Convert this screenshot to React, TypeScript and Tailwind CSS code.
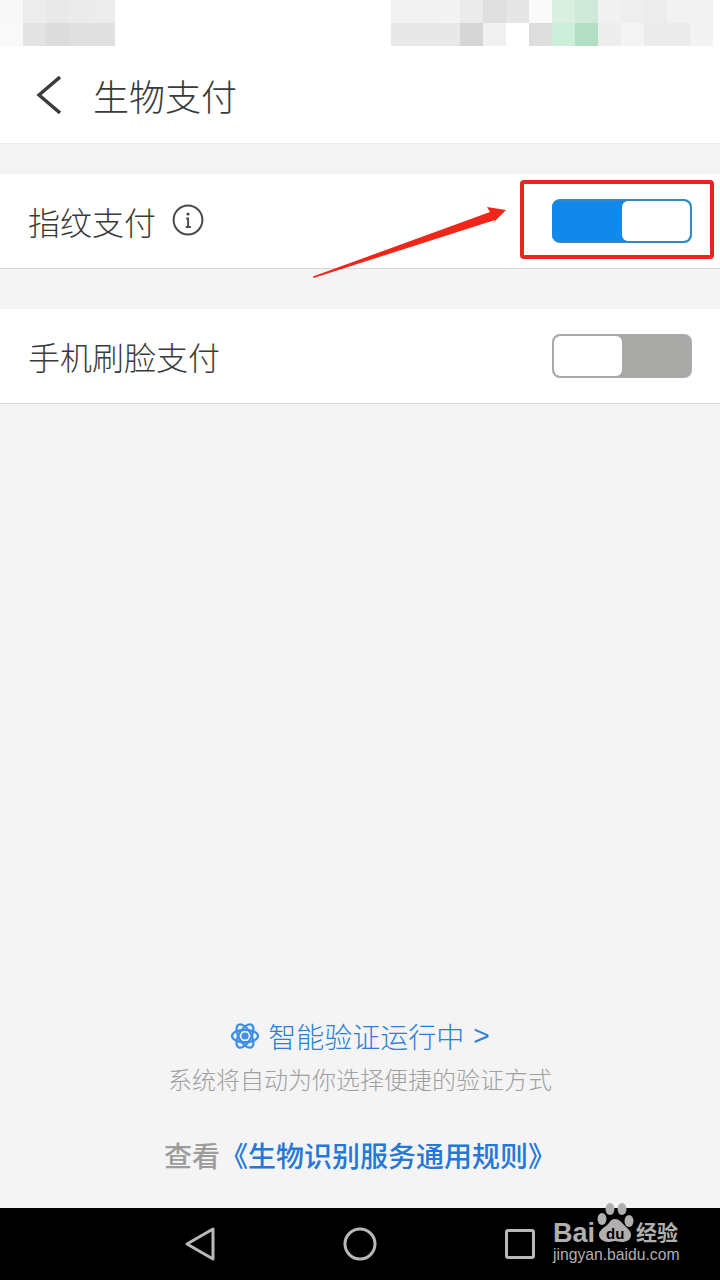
const font = "font-['Noto_Sans_CJK_SC','Noto_Sans',sans-serif]";

const leftTop = ['bg-[#f8f8f8]', 'bg-[#ececec]', 'bg-[#e9e9e9]', 'bg-[#ebebeb]', 'bg-[#ececec]'];
const leftBottom = ['bg-[#f9f9f9]', 'bg-[#e3e3e3]', 'bg-[#dcdcdc]', 'bg-[#e0e0e0]', 'bg-[#e0e0e0]'];
const rightTop = [
  'bg-[#f2f2f2]', 'bg-[#f2f2f2]', 'bg-[#f3f3f3]', 'bg-[#ebebeb]', 'bg-[#dfdfdf]', 'bg-[#e6e6e6]', 'bg-[#fafafa]',
  'bg-[#d8efe2]', 'bg-[#cfe8da]', 'bg-[#f1f1f1]', 'bg-[#eeeeee]', 'bg-[#ececec]', 'bg-[#f2f2f2]', 'bg-[#f3f3f3]',
];
const rightBottom = [
  'bg-[#e8e8e8]', 'bg-[#e8e8e8]', 'bg-[#e8e8e8]', 'bg-[#d6d6d6]', 'bg-[#f0f0f0]', 'bg-white', 'bg-[#dedede]',
  'bg-[#cdeedb]', 'bg-[#b2dfc4]', 'bg-[#ededed]', 'bg-[#f4f4f4]', 'bg-[#ebebeb]', 'bg-[#ebebeb]', 'bg-[#f3f3f3]',
];

function Mosaic({ top, bottom }: { top: string[]; bottom: string[] }) {
  return (
    <div className="flex flex-col">
      {[top, bottom].map((row, r) => (
        <div key={r} className="flex">
          {row.map((c, i) => (
            <div key={i} className={`w-[23px] h-[23px] ${c}`} />
          ))}
        </div>
      ))}
    </div>
  );
}

function Toggle({ on }: { on: boolean }) {
  if (on) {
    return (
      <div className="w-[140px] h-[44px] rounded-[8px] flex overflow-hidden bg-[#1288ea] border-2 border-l-0 border-[#2f8ac4]">
        <div className="w-[70px] bg-[#1288ea]" />
        <div className="flex-1 bg-white rounded-[6px]" />
      </div>
    );
  }
  return (
    <div className="w-[140px] h-[44px] rounded-[8px] flex overflow-hidden bg-[#a9a9a8] border-2 border-[#a9a9a8]">
      <div className="w-[68px] bg-white rounded-[6px]" />
    </div>
  );
}

export default function App() {
  return (
    <div className={`relative w-[720px] h-[1280px] overflow-hidden flex flex-col bg-[#f4f4f4] ${font}`}>
      {/* status bar, blurred */}
      <div className="h-[46px] bg-white flex justify-between pr-[7px]">
        <Mosaic top={leftTop} bottom={leftBottom} />
        <Mosaic top={rightTop} bottom={rightBottom} />
      </div>

      {/* title */}
      <div className="h-[98px] bg-white border-b border-[#ececec] flex items-center pl-[36px]">
        <svg width="25" height="38" viewBox="0 0 25 38" fill="none" stroke="#3c3c3c" strokeWidth="3.4" className="mt-[1px]">
          <path d="M24 1 L3 19 L24 37" />
        </svg>
        <span className="ml-[32px] text-[36px] leading-none text-[#3a3a3a] font-light">生物支付</span>
      </div>

      {/* fingerprint row */}
      <div className="mt-[30px] h-[95px] bg-white border-b border-[#d8d8d8] flex items-center justify-between pl-[28px] pr-[28px]">
        <div className="flex items-center">
          <span className="text-[32px] leading-none text-[#3a3a3a] font-light">指纹支付</span>
          <svg width="32" height="32" viewBox="0 0 32 32" fill="none" className="ml-[16px] mb-[2px]">
            <circle cx="16" cy="16" r="14.4" stroke="#4a4a4a" strokeWidth="2" />
            <circle cx="16" cy="10" r="1.6" fill="#4a4a4a" />
            <path d="M14.2 14.5h1.9v8.6M13.8 23h5" stroke="#4a4a4a" strokeWidth="1.9" />
          </svg>
        </div>
        <Toggle on />
      </div>

      {/* face row */}
      <div className="mt-[40px] h-[95px] bg-white border-b border-[#d8d8d8] flex items-center justify-between pl-[28px] pr-[28px]">
        <span className="text-[32px] leading-none text-[#3a3a3a] font-light">手机刷脸支付</span>
        <Toggle on={false} />
      </div>

      {/* footer notes */}
      <div className="flex-1 flex flex-col items-center justify-end pb-[35px]">
        <div className="flex items-center h-[40px] pl-[2px] text-[28px] leading-none text-[#2a80d8] font-light">
          <svg width="30" height="28" viewBox="0 0 30 28" fill="none" stroke="#3d8fe8" strokeWidth="2.2" className="mr-[8px] -ml-[2px]">
            <ellipse cx="15" cy="14" rx="13" ry="6.2" />
            <ellipse cx="15" cy="14" rx="13" ry="6.2" transform="rotate(60 15 14)" />
            <ellipse cx="15" cy="14" rx="13" ry="6.2" transform="rotate(120 15 14)" />
            <circle cx="15" cy="14" r="3.6" fill="#3d8fe8" stroke="none" />
          </svg>
          <span>智能验证运行中</span>
          <span className="ml-[9px] font-['Liberation_Sans',sans-serif]">&gt;</span>
        </div>
        <div className="mt-[8px] text-[24px] leading-[30px] text-[#a0a0a0] font-light">系统将自动为你选择便捷的验证方式</div>
        <div className="mt-[43px] text-[28px] leading-[36px] font-medium text-[#9c9c9c]">
          查看<span className="text-[#2378d8]">《生物识别服务通用规则》</span>
        </div>
      </div>

      {/* nav bar */}
      <div className="h-[72px] bg-black flex items-center justify-between pl-[184px] pr-[185px]">
        <svg width="32" height="36" viewBox="0 0 32 36" fill="none" stroke="#b8b8b8" strokeWidth="3">
          <path d="M29 3 V33 L3 18 Z" strokeLinejoin="round" />
        </svg>
        <svg width="34" height="34" viewBox="0 0 34 34" fill="none" stroke="#b8b8b8" strokeWidth="3" className="mr-[2px]">
          <circle cx="17" cy="17" r="15" />
        </svg>
        <div className="w-[30px] h-[30px] border-[3px] border-[#b8b8b8] rounded-[3px]" />
      </div>

      {/* red markup */}
      <div className="absolute left-[520px] top-[180px] w-[194px] h-[79px] border-[4px] border-[#e8261f] rounded-[4px]" />
      <svg className="absolute left-[310px] top-[200px]" width="200" height="80" viewBox="0 0 200 80">
        <path d="M3 76.5 L180 12 L177 7 L196 10 L183 23 L185 20 L3.5 78 Z" fill="#f0261a" />
      </svg>

      {/* watermark */}
      <div className="absolute left-[553px] top-[1203px] w-[130px] text-[#b0b0b0]">
        <div className="flex items-end h-[40px]">
          <span className="font-['Liberation_Sans',sans-serif] font-bold text-[27px] leading-[20px]">Bai</span>
          <div className="relative w-[41px] h-[40px]">
            <svg width="41" height="40" viewBox="0 0 41 40" fill="#b0b0b0">
              <ellipse cx="7" cy="16" rx="4.5" ry="6" />
              <ellipse cx="15" cy="6" rx="4.5" ry="6" />
              <ellipse cx="27" cy="6" rx="4.5" ry="6" />
              <ellipse cx="34" cy="18" rx="4.5" ry="6" />
              <path d="M20 16c5 0 7 4 10 7s6 5 6 9c0 5-5 7-9 7-3 0-5-1-7-1s-3 1-7 1c-4 0-9-3-9-7s3-6 7-9 4-7 9-7z" />
            </svg>
            <span className="absolute left-[11px] top-[23px] text-[15px] leading-[15px] font-bold text-black font-['Liberation_Sans',sans-serif]">du</span>
          </div>
          <span className="text-[21px] leading-[24px] font-bold">经验</span>
        </div>
        <div className="mt-[3px] text-[15.7px] leading-[18px] whitespace-nowrap font-['Liberation_Sans',sans-serif]">jingyan.baidu.com</div>
      </div>
    </div>
  );
}
